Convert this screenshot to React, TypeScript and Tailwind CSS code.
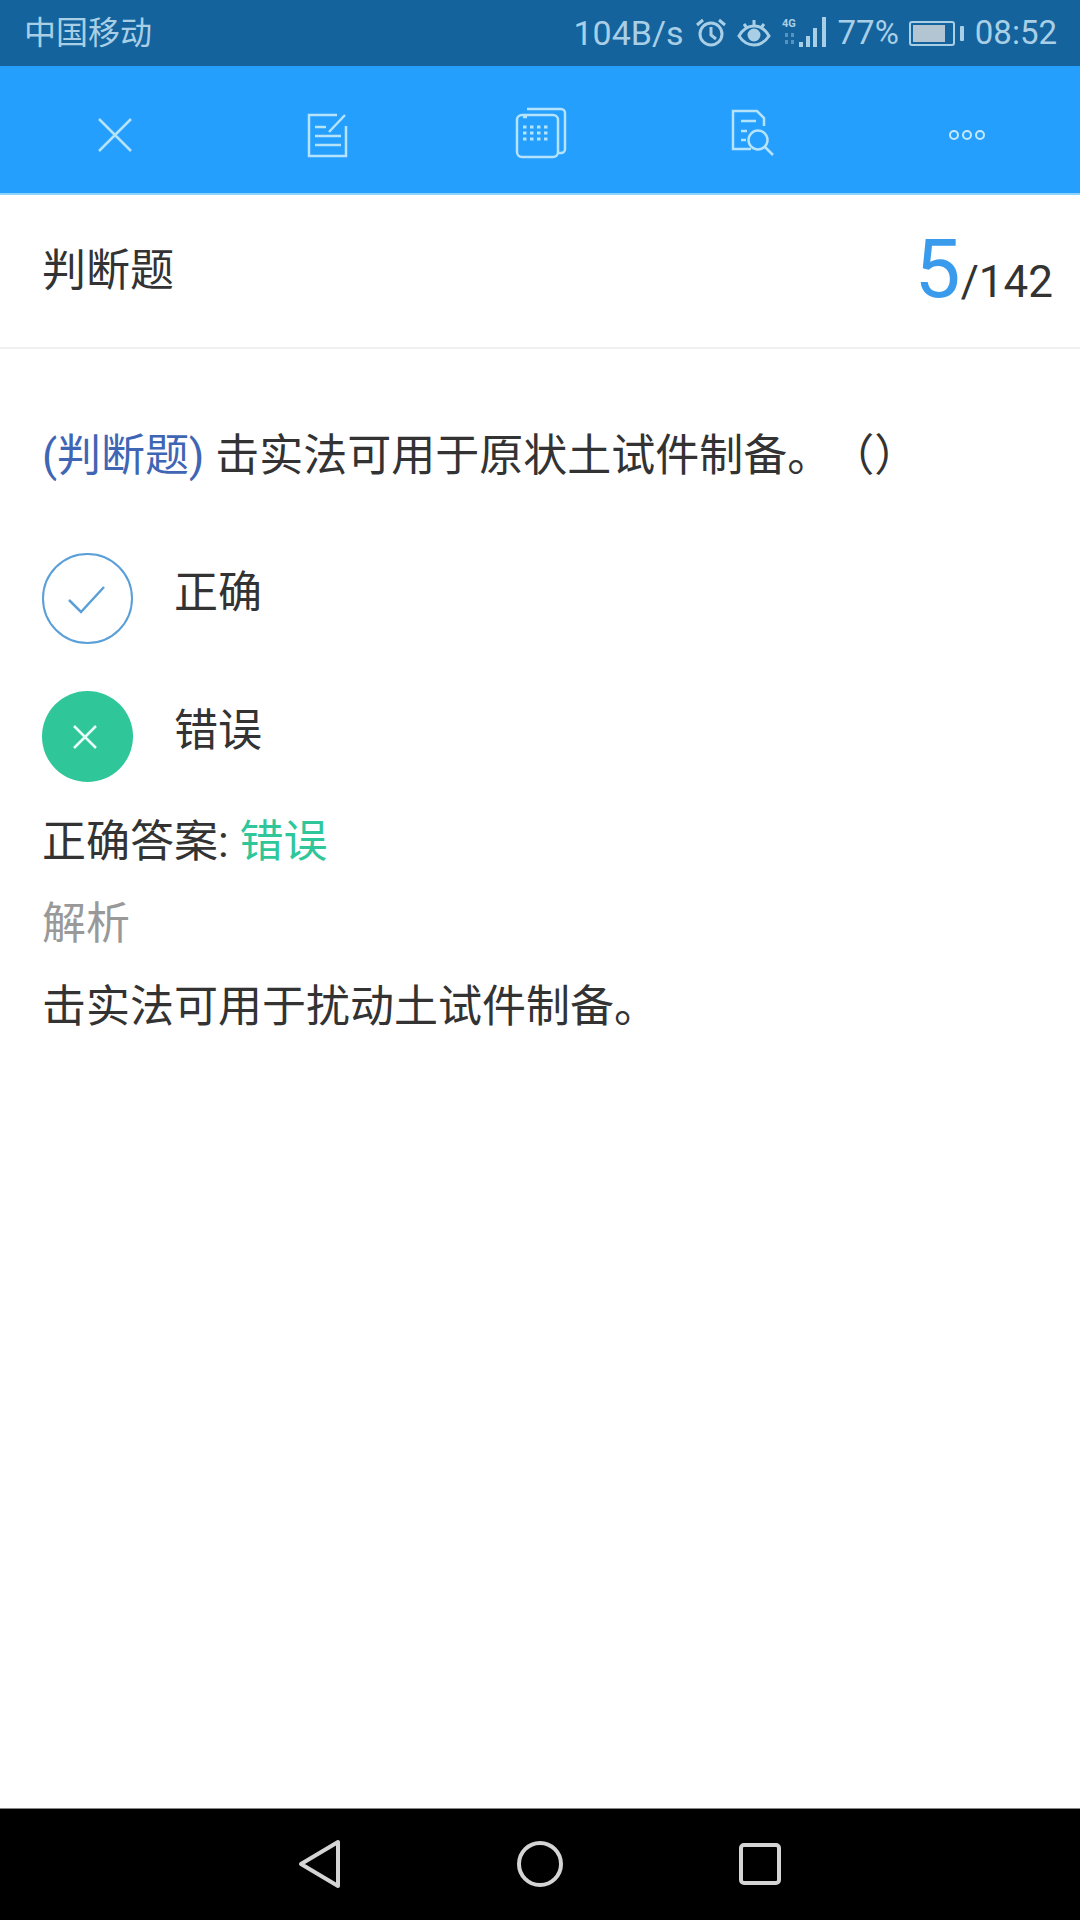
const FONT = "font-['Roboto','Noto_Sans_CJK_SC',sans-serif]";

function StatusIcons() {
  return (
    <>
      <svg width="34" height="34" viewBox="0 0 34 34" fill="none" stroke="#a9cfe6" strokeWidth="3" className="ml-[10px]">
        <circle cx="17" cy="18" r="11" />
        <path d="M17 11v8l5 4M3 9l6-5M31 9l-6-5" />
      </svg>
      <svg width="36" height="34" viewBox="0 0 36 34" fill="none" stroke="#a9cfe6" strokeWidth="3" className="ml-[8px]">
        <path d="M3 20c4-7 9-10 15-10s11 3 15 10c-4 6-9 9-15 9s-11-3-15-9z" />
        <circle cx="18" cy="19" r="5" fill="#a9cfe6" />
        <path d="M8 8l3 4M18 4v5M28 8l-3 4" />
      </svg>
      <svg width="48" height="34" viewBox="0 0 48 34" fill="#a9cfe6" className="ml-[10px]">
        <text x="0" y="11" fontSize="11" fontWeight="700" fontFamily="Roboto, sans-serif">4G</text>
        <path d="M3 17h3v4H3zM9 17h3v4H9zM3 24h3v4H3zM9 24h3v4H9z" opacity=".45" />
        <rect x="17" y="26" width="4" height="5" />
        <rect x="24" y="20" width="4" height="11" />
        <rect x="31" y="12" width="4" height="19" />
        <rect x="40" y="1" width="4" height="30" />
      </svg>
    </>
  );
}

function Toolbar() {
  const c = "#b5e3fb";
  return (
    <div className="grid h-[129px] grid-cols-5 items-center border-b-2 border-[#8fd2fb] bg-[#249ffd] pl-[8px] pr-[6px] pt-[10px]">
      <div className="flex justify-center">
        <svg width="36" height="36" viewBox="0 0 36 36" fill="none" stroke={c} strokeWidth="2.5"><path d="M2 2l32 32M34 2L2 34" /></svg>
      </div>
      <div className="flex justify-center">
        <svg width="42" height="46" viewBox="0 0 42 46" fill="none" stroke={c} strokeWidth="2.5">
          <path d="M30 3H2v41h37V14" />
          <path d="M8 15h11M8 24h26M8 33h26" />
          <path d="M22 20L38 3" />
        </svg>
      </div>
      <div className="flex justify-center pb-[4px]">
        <svg width="52" height="52" viewBox="0 0 52 52" fill="none" stroke={c} strokeWidth="2.5">
          <path d="M12 2h34a4 4 0 0 1 4 4v36a4 4 0 0 1-4 4h-3" />
          <rect x="2" y="8" width="41" height="42" rx="5" />
          <path d="M8 20h28M8 26h28M8 32h28" strokeDasharray="3.5 3.5" strokeWidth="3" />
          <path d="M8 10h4" />
        </svg>
      </div>
      <div className="flex justify-center pb-[4px]">
        <svg width="46" height="48" viewBox="0 0 46 48" fill="none" stroke={c} strokeWidth="2.5">
          <path d="M20 40H2V2h24l7 7v8" />
          <path d="M10 12h15M10 22h6M10 31h5" />
          <circle cx="27" cy="31" r="9.5" />
          <path d="M34 38l8 8" />
        </svg>
      </div>
      <div className="flex justify-center gap-[3px] pt-[1px]">
        <span className="size-[10px] rounded-full border-2 border-[#c5e9fb]" />
        <span className="size-[10px] rounded-full border-2 border-[#c5e9fb]" />
        <span className="size-[10px] rounded-full border-2 border-[#c5e9fb]" />
      </div>
    </div>
  );
}

export default function App() {
  return (
    <div className={`${FONT} flex h-[1920px] w-[1080px] flex-col overflow-hidden bg-white text-[#333333]`}>
      <div className="flex h-[66px] items-center justify-between bg-[#14639d] pl-[24px] pr-[23px] text-[33px] text-[#a9cfe6]">
        <span className="text-[32px]">中国移动</span>
        <div className="flex items-center">
          <span className="text-[34px]">104B/s</span>
          <StatusIcons />
          <span className="ml-[8px]">77%</span>
          <div className="ml-[10px] flex items-center">
            <div className="h-[25px] w-[46px] rounded-[3px] border-2 border-[#a9cfe6] p-[2px]">
              <div className="h-full w-[32px] bg-[#b3c4d3]" />
            </div>
            <div className="ml-[5px] h-[15px] w-[4px] rounded-[1px] bg-[#a9cfe6]" />
          </div>
          <span className="ml-[11px]">08:52</span>
        </div>
      </div>
      <Toolbar />
      <div className="flex h-[154px] items-center justify-between border-b-2 border-[#f0f0f0] pl-[42px] pr-[27px]">
        <span className="text-[44px]">判断题</span>
        <div className="flex items-baseline">
          <span className="-mt-[4px] text-[82px] leading-none text-[#3a9bec]">5</span>
          <span className="text-[44px] leading-none">/142</span>
        </div>
      </div>
      <div className="flex flex-1 flex-col px-[42px]">
        <p className="mt-[79px] text-[44px] leading-[56px]">
          <span className="text-[#3f66b5]">(判断题)</span> 击实法可用于原状土试件制备。<span className="ml-[21px]">（）</span>
        </p>
        <div className="mt-[69px] flex flex-col gap-[47px]">
          <div className="flex items-center gap-[41px]">
            <div className="flex size-[91px] items-center justify-center rounded-full border-2 border-[#5b9fd8]">
              <svg width="38" height="30" viewBox="0 0 38 30" fill="none" stroke="#5b9fd8" strokeWidth="2.5" className="mr-[2px] mt-[2px]"><path d="M1 15l12 12L36 2" /></svg>
            </div>
            <span className="-mt-[12px] text-[44px]">正确</span>
          </div>
          <div className="flex items-center gap-[41px]">
            <div className="flex size-[91px] items-center justify-center rounded-full bg-[#2fc79a]">
              <svg width="24" height="24" viewBox="0 0 24 24" fill="none" stroke="#e8fff8" strokeWidth="2.5" className="mr-[5px]"><path d="M1 1l22 22M23 1L1 23" /></svg>
            </div>
            <span className="-mt-[12px] text-[44px]">错误</span>
          </div>
        </div>
        <p className="mt-[32px] text-[44px] leading-[56px]">
          正确答案: <span className="text-[#2fc79a]">错误</span>
        </p>
        <p className="mt-[26px] text-[44px] leading-[56px] text-[#999999]">解析</p>
        <p className="mt-[27px] text-[44px] leading-[56px]">击实法可用于扰动土试件制备。</p>
      </div>
      <div className="flex h-[112px] items-center border-t border-[#888888] bg-black pb-[2px] pl-[298px]">
        <svg width="44" height="50" viewBox="0 0 44 50" fill="none" stroke="#d4d4d4" strokeWidth="4" strokeLinejoin="round"><path d="M3 25L40 3v44z" /></svg>
        <svg width="48" height="48" viewBox="0 0 48 48" fill="none" stroke="#d4d4d4" strokeWidth="4" className="ml-[174px]"><circle cx="24" cy="24" r="21" /></svg>
        <svg width="44" height="44" viewBox="0 0 44 44" fill="none" stroke="#d4d4d4" strokeWidth="4" className="ml-[174px]"><rect x="3" y="3" width="38" height="38" rx="3" /></svg>
      </div>
    </div>
  );
}
